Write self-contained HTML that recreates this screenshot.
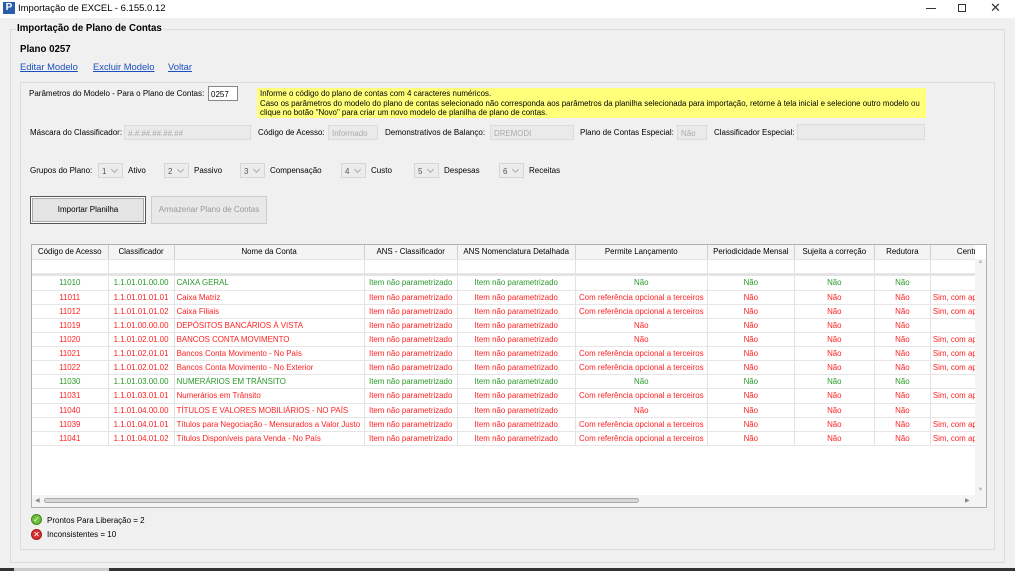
<!DOCTYPE html>
<html><head><meta charset="utf-8"><style>
*{margin:0;padding:0;box-sizing:border-box}
body{width:1015px;height:571px;overflow:hidden;background:#f0f0f0;font-family:"Liberation Sans",Tahoma,sans-serif;font-size:8px;color:#000;position:relative}
.a{position:absolute;white-space:nowrap}
.tb{left:0;top:0;width:1015px;height:18px;background:#fff}
.lnk{color:#1a4fc0;text-decoration:underline;font-size:9.4px}
.inp{position:absolute;height:15px;border:1px solid #dcdcdc;background:#eaeaea;color:#aaa;font-size:7.9px;padding:3px 3px}
.cb{position:absolute;width:25px;height:15px;border:1px solid #d6d6d6;background:#ececec;font-size:8px;padding:3px 3px;color:#555}
.cb:after{content:"";position:absolute;right:5px;top:3px;width:4px;height:4px;border-right:1px solid #aaa;border-bottom:1px solid #aaa;transform:rotate(45deg)}
table{border-collapse:collapse;table-layout:fixed;font-size:7.9px}
td{border-right:1px solid #e2e2e2;border-bottom:1px solid #e6e6e6;height:14.1px;white-space:nowrap;overflow:hidden;text-align:center;padding:0 2px}
.g td{color:#2a9a2a}.r td{color:#f22}
td.l{text-align:left}
</style></head><body>
<div class="a tb"></div>
<div class="a" style="left:3px;top:2px;width:12px;height:12px;background:#2a5ea8;color:#fff;font-size:10px;font-weight:bold;line-height:12px;text-align:center">P</div>
<div class="a" style="left:18px;top:3px;font-size:9.5px">Importação de EXCEL - 6.155.0.12</div>
<div class="a" style="left:926px;top:8px;width:10px;height:1px;background:#333"></div>
<div class="a" style="left:958px;top:4px;width:8px;height:8px;border:1px solid #333"></div>
<div class="a" style="left:990px;top:0px;font-size:13px;color:#333">✕</div>

<div class="a" style="left:10px;top:29px;width:995px;height:534px;border:1px solid #dcdcdc"></div>
<div class="a" style="left:16px;top:23px;font-size:9.7px;font-weight:bold;background:#f0f0f0;padding:0 1px">Importação de Plano de Contas</div>
<div class="a" style="left:20px;top:44px;font-size:9.7px;font-weight:bold">Plano 0257</div>
<div class="a lnk" style="left:20px;top:61px">Editar Modelo</div>
<div class="a lnk" style="left:93px;top:61px">Excluir Modelo</div>
<div class="a lnk" style="left:168px;top:61px">Voltar</div>

<div class="a" style="left:20px;top:82px;width:975px;height:468px;border:1px solid #dcdcdc"></div>
<div class="a" style="left:29px;top:89px">Parâmetros do Modelo - Para o Plano de Contas:</div>
<div class="a" style="left:208px;top:86px;width:30px;height:15px;border:1px solid #888;background:#fff;font-size:8px;padding:3px 2px">0257</div>
<div class="a" style="left:257px;top:88px;width:669px;height:30px;background:#ffff7a;font-size:7.9px;line-height:9.6px;padding:1px 3px;overflow:hidden">Informe o código do plano de contas com 4 caracteres numéricos.<br>Caso os parâmetros do modelo do plano de contas selecionado não corresponda aos parâmetros da planilha selecionada para importação, retorne à tela inicial e selecione outro modelo ou<br>clique no botão "Novo" para criar um novo modelo de planilha de plano de contas.</div>

<div class="a" style="left:30px;top:128px">Máscara do Classificador:</div>
<div class="inp" style="left:124px;top:125px;width:127px;font-style:italic">#.#.##.##.##.##</div>
<div class="a" style="left:258px;top:128px">Código de Acesso:</div>
<div class="inp" style="left:328px;top:125px;width:50px">Informado</div>
<div class="a" style="left:385px;top:128px">Demonstrativos de Balanço:</div>
<div class="inp" style="left:490px;top:125px;width:84px">DREMODI</div>
<div class="a" style="left:580px;top:128px">Plano de Contas Especial:</div>
<div class="inp" style="left:677px;top:125px;width:30px">Não</div>
<div class="a" style="left:714px;top:128px">Classificador Especial:</div>
<div class="inp" style="left:797px;top:124px;width:128px;height:16px"></div>

<div class="a" style="left:30px;top:166px">Grupos do Plano:</div>
<div class="cb" style="left:98px;top:163px">1</div><div class="a" style="left:128px;top:166px">Ativo</div>
<div class="cb" style="left:164px;top:163px">2</div><div class="a" style="left:194px;top:166px">Passivo</div>
<div class="cb" style="left:240px;top:163px">3</div><div class="a" style="left:270px;top:166px">Compensação</div>
<div class="cb" style="left:341px;top:163px">4</div><div class="a" style="left:371px;top:166px">Custo</div>
<div class="cb" style="left:414px;top:163px">5</div><div class="a" style="left:444px;top:166px">Despesas</div>
<div class="cb" style="left:499px;top:163px">6</div><div class="a" style="left:529px;top:166px">Receitas</div>

<div class="a" style="left:30px;top:196px;width:116px;height:28px;border:1px solid #555;background:#e4e4e4;box-shadow:inset 0 0 0 1px #fff,inset 0 0 0 2px #aaa;text-align:center;line-height:26px">Importar Planilha</div>
<div class="a" style="left:151px;top:196px;width:116px;height:28px;border:1px solid #ccc;background:#e8e8e8;color:#999;text-align:center;line-height:26px">Armazenar Plano de Contas</div>

<div class="a" style="left:31px;top:244px;width:956px;height:264px;border:1px solid #b0b0b0;background:#fff;overflow:hidden">
<div style="position:absolute;left:0;top:0;width:943px;height:250px;overflow:hidden">
<table style="width:1000px">
<colgroup><col style="width:76px"><col style="width:66px"><col style="width:190px"><col style="width:93px"><col style="width:118px"><col style="width:132px"><col style="width:87px"><col style="width:80px"><col style="width:56px"><col style="width:101px"></colgroup>
<tr style="background:#f4f4f4"><td style="border-right:1px solid #d0d0d0">Código de Acesso</td><td style="border-right:1px solid #d0d0d0">Classificador</td><td style="border-right:1px solid #d0d0d0">Nome da Conta</td><td style="border-right:1px solid #d0d0d0">ANS - Classificador</td><td style="border-right:1px solid #d0d0d0">ANS Nomenclatura Detalhada</td><td style="border-right:1px solid #d0d0d0">Permite Lançamento</td><td style="border-right:1px solid #d0d0d0">Periodicidade Mensal</td><td style="border-right:1px solid #d0d0d0">Sujeita a correção</td><td style="border-right:1px solid #d0d0d0">Redutora</td><td style="text-align:left;padding-left:26px">Centro de Custo</td></tr>
<tr><td></td><td></td><td></td><td></td><td></td><td></td><td></td><td></td><td></td><td></td></tr>
<tr><td colspan="10" style="height:3px;background:#e4e4e4;border:0"></td></tr>
<tr class="g"><td>11010</td><td>1.1.01.01.00.00</td><td class="l">CAIXA GERAL</td><td>Item não parametrizado</td><td>Item não parametrizado</td><td>Não</td><td>Não</td><td>Não</td><td>Não</td><td></td></tr>
<tr class="r"><td>11011</td><td>1.1.01.01.01.01</td><td class="l">Caixa Matriz</td><td>Item não parametrizado</td><td>Item não parametrizado</td><td>Com referência opcional a terceiros</td><td>Não</td><td>Não</td><td>Não</td><td class="l">Sim, com apropriação</td></tr>
<tr class="r"><td>11012</td><td>1.1.01.01.01.02</td><td class="l">Caixa Filiais</td><td>Item não parametrizado</td><td>Item não parametrizado</td><td>Com referência opcional a terceiros</td><td>Não</td><td>Não</td><td>Não</td><td class="l">Sim, com apropriação</td></tr>
<tr class="r"><td>11019</td><td>1.1.01.00.00.00</td><td class="l">DEPÓSITOS BANCÁRIOS À VISTA</td><td>Item não parametrizado</td><td>Item não parametrizado</td><td>Não</td><td>Não</td><td>Não</td><td>Não</td><td></td></tr>
<tr class="r"><td>11020</td><td>1.1.01.02.01.00</td><td class="l">BANCOS CONTA MOVIMENTO</td><td>Item não parametrizado</td><td>Item não parametrizado</td><td>Não</td><td>Não</td><td>Não</td><td>Não</td><td class="l">Sim, com apropriação</td></tr>
<tr class="r"><td>11021</td><td>1.1.01.02.01.01</td><td class="l">Bancos Conta Movimento - No País</td><td>Item não parametrizado</td><td>Item não parametrizado</td><td>Com referência opcional a terceiros</td><td>Não</td><td>Não</td><td>Não</td><td class="l">Sim, com apropriação</td></tr>
<tr class="r"><td>11022</td><td>1.1.01.02.01.02</td><td class="l">Bancos Conta Movimento - No Exterior</td><td>Item não parametrizado</td><td>Item não parametrizado</td><td>Com referência opcional a terceiros</td><td>Não</td><td>Não</td><td>Não</td><td class="l">Sim, com apropriação</td></tr>
<tr class="g"><td>11030</td><td>1.1.01.03.00.00</td><td class="l">NUMERÁRIOS EM TRÂNSITO</td><td>Item não parametrizado</td><td>Item não parametrizado</td><td>Não</td><td>Não</td><td>Não</td><td>Não</td><td></td></tr>
<tr class="r"><td>11031</td><td>1.1.01.03.01.01</td><td class="l">Numerários em Trânsito</td><td>Item não parametrizado</td><td>Item não parametrizado</td><td>Com referência opcional a terceiros</td><td>Não</td><td>Não</td><td>Não</td><td class="l">Sim, com apropriação</td></tr>
<tr class="r"><td>11040</td><td>1.1.01.04.00.00</td><td class="l">TÍTULOS E VALORES MOBILIÁRIOS - NO PAÍS</td><td>Item não parametrizado</td><td>Item não parametrizado</td><td>Não</td><td>Não</td><td>Não</td><td>Não</td><td></td></tr>
<tr class="r"><td>11039</td><td>1.1.01.04.01.01</td><td class="l">Títulos para Negociação - Mensurados a Valor Justo</td><td>Item não parametrizado</td><td>Item não parametrizado</td><td>Com referência opcional a terceiros</td><td>Não</td><td>Não</td><td>Não</td><td class="l">Sim, com apropriação</td></tr>
<tr class="r"><td>11041</td><td>1.1.01.04.01.02</td><td class="l">Títulos Disponíveis para Venda - No País</td><td>Item não parametrizado</td><td>Item não parametrizado</td><td>Com referência opcional a terceiros</td><td>Não</td><td>Não</td><td>Não</td><td class="l">Sim, com apropriação</td></tr>
</table></div>
<div style="position:absolute;left:943px;top:14px;width:11px;height:236px;background:#f4f4f4;color:#bbb;font-size:6px;text-align:center">▲<div style="position:absolute;bottom:2px;width:11px">▼</div></div>
<div style="position:absolute;left:0;top:250px;width:954px;height:13px;background:#f4f4f4"></div>
<div style="position:absolute;left:3px;top:252px;font-size:6px;color:#888">◀</div>
<div style="position:absolute;left:933px;top:252px;font-size:6px;color:#888">▶</div>
<div style="position:absolute;left:12px;top:253px;width:595px;height:5px;border:1px solid #aaa;border-radius:3px;background:#d8d8d8"></div>
</div>

<div class="a" style="left:31px;top:514px;width:11px;height:11px;border-radius:50%;background:#6cbd3a;border:1px solid #3d8a1f;color:#fff;font-size:8px;line-height:9px;text-align:center">✓</div>
<div class="a" style="left:47px;top:516px">Prontos Para Liberação = 2</div>
<div class="a" style="left:31px;top:529px;width:11px;height:11px;border-radius:50%;background:#d83030;border:1px solid #a01818;color:#fff;font-size:8px;line-height:9px;text-align:center">✕</div>
<div class="a" style="left:47px;top:530px">Inconsistentes = 10</div>

<div class="a" style="left:0;top:568px;width:1015px;height:3px;background:#333"></div>
<div class="a" style="left:14px;top:568px;width:95px;height:3px;background:#ccc"></div>
</body></html>
